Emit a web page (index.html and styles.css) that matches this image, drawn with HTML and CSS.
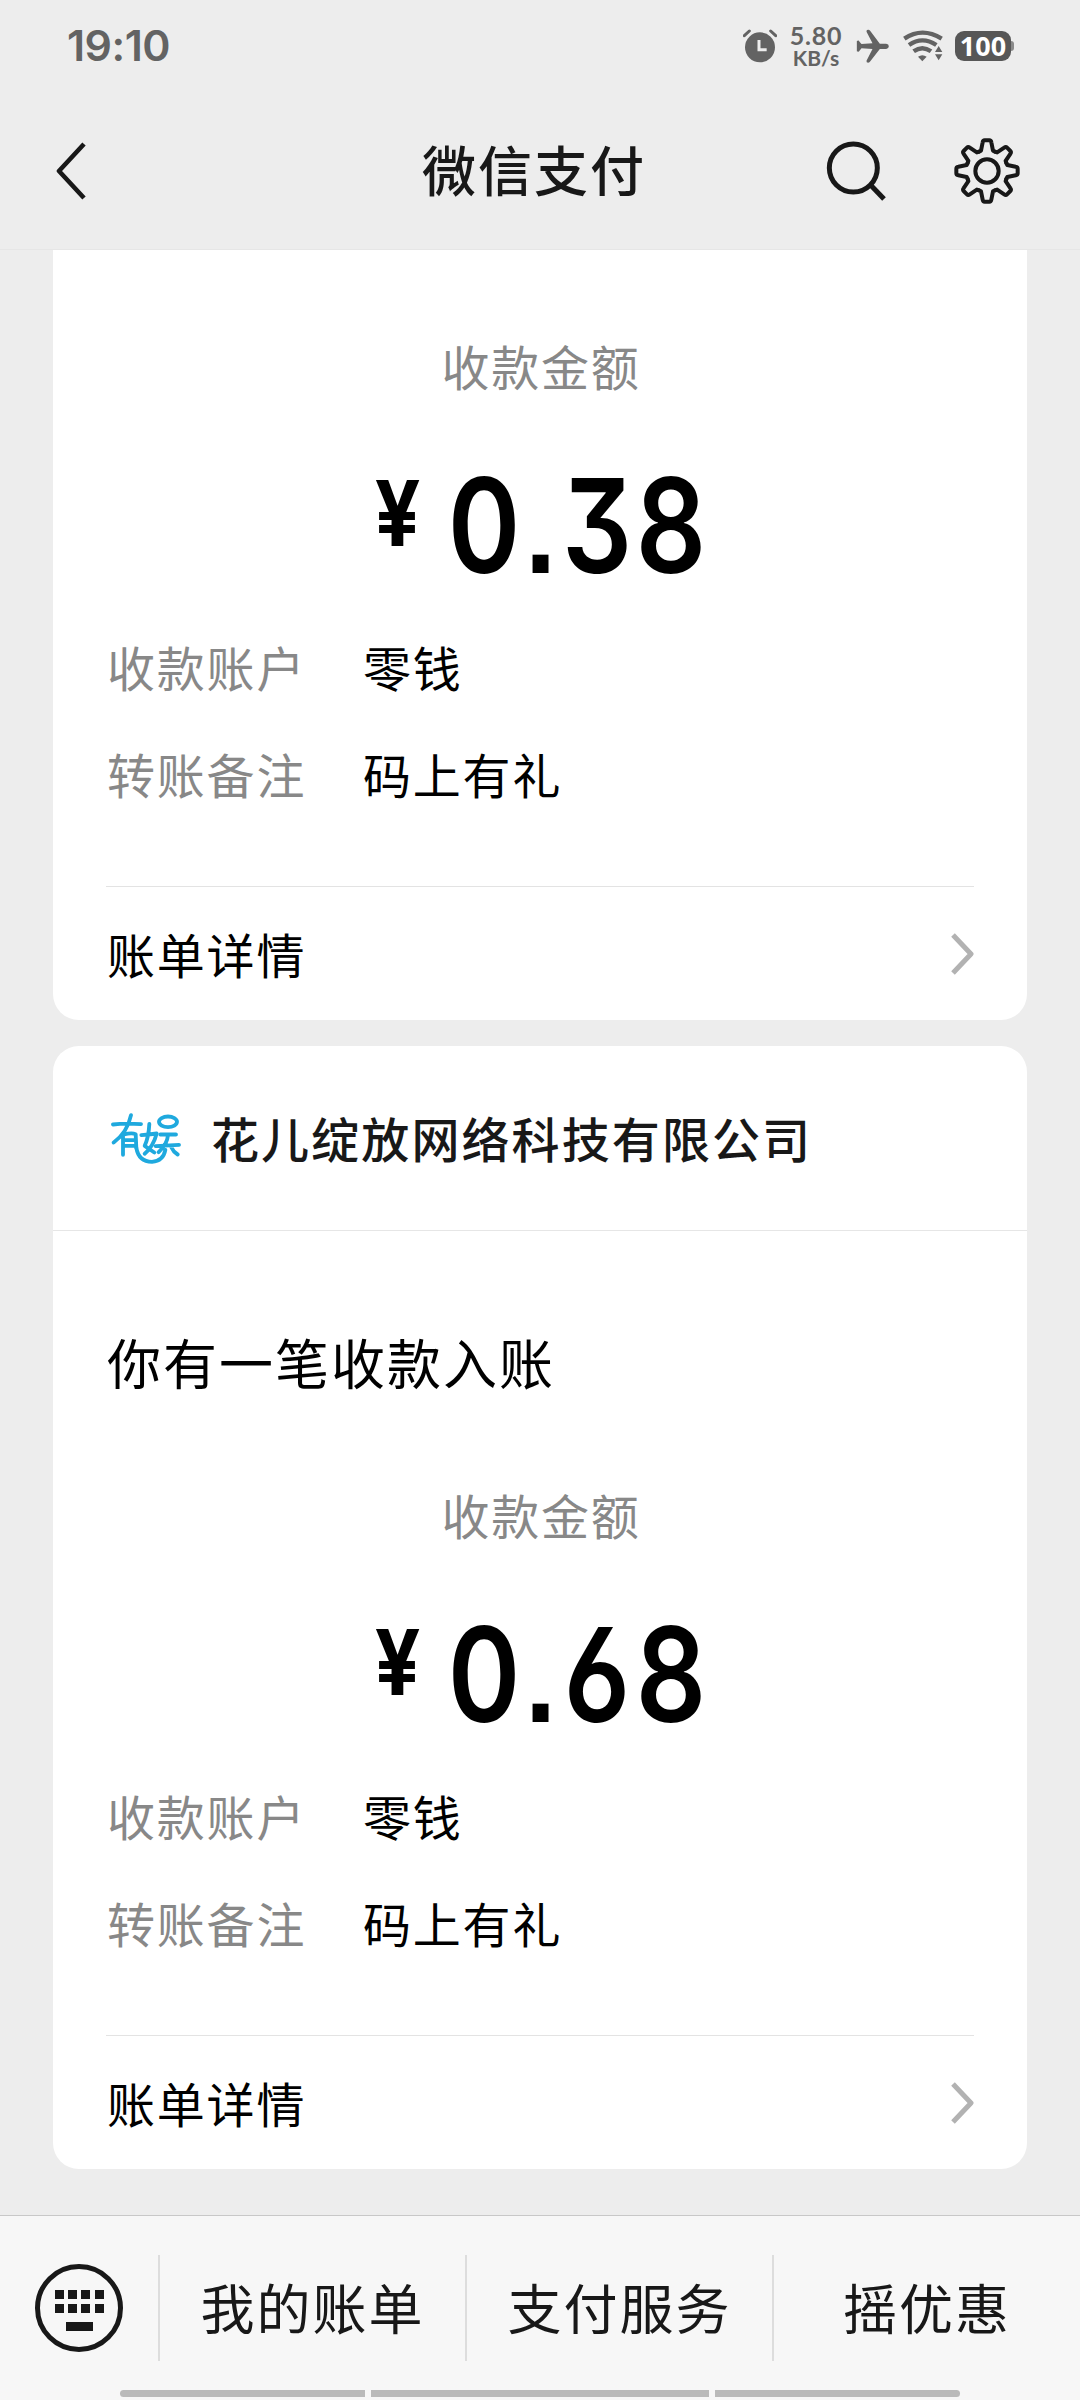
FILE: index.html
```html
<!DOCTYPE html>
<html lang="zh-CN">
<head>
<meta charset="utf-8">
<title>微信支付</title>
<link rel="stylesheet" href="styles.css">
</head>
<body>
<div class="screen">
  <div class="statusbar">
    <span class="time">19:10</span>
    <div class="indicators">
      <svg class="alarm" viewBox="0 0 102 102" fill="#636363">
        <circle cx="51" cy="55" r="45"/>
        <path d="M4 20 19 6M98 20 83 6" stroke="#636363" stroke-width="9" stroke-linecap="round"/>
        <path d="M48 33v29h23" fill="none" stroke="#ededed" stroke-width="9"/>
      </svg>
      <div class="speed"><span class="rate">5.80</span><span class="unit">KB/s</span></div>
      <svg class="plane" viewBox="0 0 98 102" fill="#636363">
        <path d="M2 36q6-4 8 2l6 7 33-2L31 8q-1-7 6-6 4 0 6 5l28 37h19q8 1 8 8t-8 8H71L43 96q-3 5-7 5-6 0-5-6l18-35-33-2-6 7q-2 5-8 2z"/>
      </svg>
      <svg class="wifi" viewBox="0 0 120 96" fill="none" stroke="#636363" stroke-width="13">
        <path d="M4 26Q58-10 116 26M18 45Q58 17 100 45M32 64Q58 45 84 64"/>
        <path d="M45 80q13-9 26 0L58 94z" fill="#636363" stroke="none"/>
        <path d="M107 48l11 18H96zM96 73h22l-11 18z" fill="#636363" stroke="none"/>
      </svg>
      <div class="battery"><span class="level">100</span><span class="tip"></span></div>
    </div>
  </div>
  <header class="navbar">
    <svg class="back" viewBox="0 0 30 58"><path d="M28 2 3 29 28 56" fill="none" stroke="#181818" stroke-width="4.6" stroke-linejoin="round"/></svg>
    <h1 class="title">微信支付</h1>
    <svg class="search" viewBox="0 0 180 180" fill="none" stroke="#181818" stroke-width="15"><circle cx="82" cy="81" r="72"/><path d="M133 131 174 174"/></svg>
    <svg class="gear" viewBox="-102 -102 204 204" fill="none" stroke="#181818" stroke-width="12" stroke-linecap="round" stroke-linejoin="round">
      <defs><path id="tooth" d="M-24-58-18-61-13-86Q-12-92-7-92H7Q12-92 13-86L18-61 24-58"/></defs>
      <circle r="35"/>
      <use href="#tooth"/><use href="#tooth" transform="rotate(45)"/><use href="#tooth" transform="rotate(90)"/><use href="#tooth" transform="rotate(135)"/><use href="#tooth" transform="rotate(180)"/><use href="#tooth" transform="rotate(225)"/><use href="#tooth" transform="rotate(270)"/><use href="#tooth" transform="rotate(315)"/>
    </svg>
  </header>
  <main class="feed">
    <section class="card card-first">
      <p class="caption">收款金额</p>
      <div class="amount"><span class="yen">¥</span><span class="digit">0</span><span class="dot">.</span><span class="digit">3</span><span class="digit">8</span></div>
      <dl class="fields">
        <dt>收款账户</dt><dd>零钱</dd>
        <dt>转账备注</dt><dd>码上有礼</dd>
      </dl>
      <div class="detail"><span class="label">账单详情</span><svg class="chevron" viewBox="0 0 24 44"><path d="M3 3 21 22 3 41" fill="none" stroke="#b2b2b2" stroke-width="5" stroke-linejoin="round"/></svg></div>
    </section>
    <section class="card">
      <div class="merchant">
        <svg class="logo" viewBox="33 25 210 155" fill="none" stroke="#1fa9de" stroke-width="11.5" stroke-linecap="round" stroke-linejoin="round">
          <path d="M39 62Q75 57 123 61M93 34Q82 86 41 116M69 92V153M72 92Q95 86 107 91L109 132M75 109H103M75 126H103"/>
          <path d="M148 60Q146 100 134 126L163 146M124 94Q145 92 170 89Q160 128 134 150"/>
          <ellipse cx="204" cy="54" rx="27" ry="16"/>
          <path d="M181 92H228M167 127 237 123M204 94Q202 120 176 145M214 130Q220 144 233 152M109 132Q116 173 156 174Q190 171 196 138"/>
        </svg>
        <span class="name">花儿绽放网络科技有限公司</span>
      </div>
      <h2 class="headline">你有一笔收款入账</h2>
      <p class="caption">收款金额</p>
      <div class="amount"><span class="yen">¥</span><span class="digit">0</span><span class="dot">.</span><span class="digit">6</span><span class="digit">8</span></div>
      <dl class="fields">
        <dt>收款账户</dt><dd>零钱</dd>
        <dt>转账备注</dt><dd>码上有礼</dd>
      </dl>
      <div class="detail"><span class="label">账单详情</span><svg class="chevron" viewBox="0 0 24 44"><path d="M3 3 21 22 3 41" fill="none" stroke="#b2b2b2" stroke-width="5" stroke-linejoin="round"/></svg></div>
    </section>
  </main>
  <footer class="footer">
    <div class="menu">
      <div class="keyboard">
        <svg class="keys" viewBox="0 0 90 92" fill="#181818">
          <circle cx="45" cy="46" r="41.5" fill="none" stroke="#181818" stroke-width="5"/>
          <path d="M21 28h9v9h-9zM34 28h9v9h-9zM47 28h9v9h-9zM61 28h9v9h-9zM21 42h9v9h-9zM34 42h9v9h-9zM47 42h9v9h-9zM61 42h9v9h-9zM32 60h27v9H32z"/>
        </svg>
      </div>
      <span class="item">我的账单</span>
      <span class="item">支付服务</span>
      <span class="item">摇优惠</span>
    </div>
    <div class="handles"><i></i><i></i><i></i></div>
  </footer>
</div>
</body>
</html>
```
FILE: styles.css
```css
* { box-sizing: border-box; margin: 0; padding: 0; }
body { background: #ededed; font-family: "Noto Sans CJK SC", sans-serif; color: #000; }
svg { display: block; flex: none; }
.screen { width: 1080px; height: 2400px; display: flex; flex-direction: column; overflow: hidden; background: #ededed; }

.statusbar { height: 92px; padding: 0 66px 0 67px; display: flex; justify-content: space-between; align-items: center; color: #636363; }
.time { font: 600 42px/60px Inter, sans-serif; letter-spacing: -0.5px; transform: scaleX(1.02); transform-origin: left; }
.indicators { display: flex; align-items: center; }
.alarm { width: 34px; height: 34px; }
.speed { width: 54px; margin: 0 13px 0 12px; display: flex; flex-direction: column; align-items: center; font-family: Lato, sans-serif; font-weight: 700; }
.rate { font-size: 25px; line-height: 23px; letter-spacing: .8px; }
.unit { font-size: 21px; line-height: 22px; }
.plane { width: 33px; height: 34px; margin-right: 14px; }
.wifi { width: 40px; height: 32px; margin-right: 12px; }
.battery { display: flex; align-items: center; }
.level { width: 56px; height: 30px; border-radius: 9px; background: #575757; color: #fff; font: 700 27px/30px "Noto Sans", sans-serif; text-align: center; }
.tip { width: 3px; height: 10px; background: #8a8a8a; border-radius: 0 3px 3px 0; }

.navbar { height: 158px; padding: 0 59px 0 56px; display: flex; align-items: center; border-bottom: 1px solid #e6e6e6; }
.back { width: 30px; height: 58px; }
.title { margin: 0 0 4px 336px; width: 224px; font-size: 54px; line-height: 80px; font-weight: 500; letter-spacing: 2px; color: #181818; white-space: nowrap; }
.search { width: 60px; height: 60px; margin-left: 180px; }
.gear { width: 68px; height: 68px; margin-left: auto; }

.feed { height: 1965px; padding: 0 53px; display: flex; flex-direction: column; gap: 26px; }
.card { border-radius: 26px; background: #fff; }
.card-first { border-radius: 0 0 26px 26px; padding-top: 79px; }
.caption { height: 72px; padding-left: 2px; text-align: center; font-size: 48px; line-height: 72px; letter-spacing: 1.8px; color: #888; }
.amount { height: 130px; margin: 60px 0 39px 317px; display: flex; align-items: center; font-family: Inter, sans-serif; font-weight: 600; font-size: 131px; line-height: 130px; font-feature-settings: "cv09", "cv03", "ss07"; }
.amount span { display: flex; justify-content: center; transform: scaleX(.84); }
.amount .yen { width: 55px; margin: 4px 22px 0 0; font-size: 91px; font-weight: 700; line-height: 96px; align-self: flex-start; transform: scaleX(.88); }
.digit { width: 74px; }
.dot { width: 39px; }
.fields { padding-left: 54px; display: grid; grid-template-columns: 256px 1fr; row-gap: 35px; font-size: 48px; line-height: 72px; letter-spacing: 1.8px; }
dt { color: #888; }
.detail { height: 134px; margin: 77px 53px 0; padding-left: 1px; border-top: 1px solid #e3e3e3; display: flex; align-items: center; justify-content: space-between; font-size: 48px; line-height: 72px; letter-spacing: 1.8px; }
.label { margin-bottom: 2px; }
.chevron { width: 24px; height: 44px; }
.merchant { height: 185px; padding-left: 58px; display: flex; align-items: center; border-bottom: 1px solid #e6e6e6; }
.logo { width: 70px; height: 52px; }
.name { margin: 0 0 3px 30px; font-size: 48px; line-height: 72px; font-weight: 500; letter-spacing: 2.1px; color: #181818; }
.headline { height: 80px; margin: 91px 0 76px 54px; font-size: 54px; line-height: 80px; font-weight: 400; letter-spacing: 2px; }

.footer { height: 185px; background: #f7f7f7; border-top: 1px solid #c8c8c8; display: flex; flex-direction: column; }
.menu { height: 106px; margin-top: 39px; display: grid; grid-template-columns: 158px 307px 307px 308px; align-items: stretch; color: #181818; font-size: 54px; letter-spacing: 2px; line-height: 103px; text-align: center; }
.item { border-left: 2px solid #ddd; }
.keyboard { display: flex; align-items: center; padding-left: 34px; }
.keys { width: 90px; height: 92px; }
.handles { margin: 29px 120px 0; height: 7px; display: grid; grid-template-columns: 245px 338px 245px; column-gap: 6px; }
.handles i { background: #bababa; }
.handles i:first-child { border-radius: 4px 0 0 4px; }
.handles i:last-child { border-radius: 0 4px 4px 0; }
```
